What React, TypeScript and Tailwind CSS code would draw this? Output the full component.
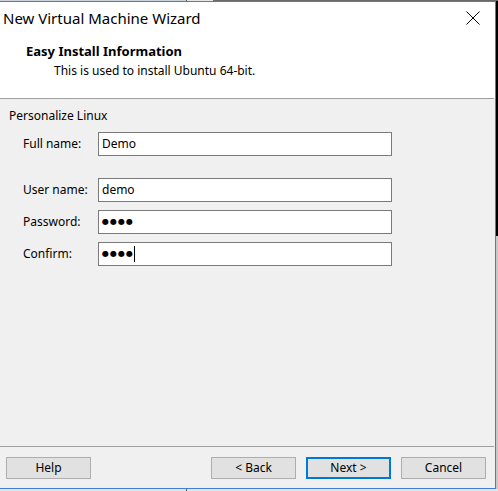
import React from "react";

// Fields of the "Personalize Linux" group
const fields = [
  { label: "Full name:", value: "Demo", kind: "text" },
  { label: "User name:", value: "demo", kind: "text" },
  { label: "Password:", value: "●●●●", kind: "secret" },
  { label: "Confirm:", value: "●●●●", kind: "secret", focused: true },
];

function CloseIcon() {
  return (
    <svg width="14" height="14" viewBox="0 0 14 14" className="block">
      <path d="M0.5 0.5 L13.5 13.5 M13.5 0.5 L0.5 13.5" stroke="#000" strokeWidth="1" fill="none" />
    </svg>
  );
}

function Field({ label, value, kind, focused }: { label: string; value: string; kind: string; focused?: boolean }) {
  return (
    <div className="flex items-center h-[24px]">
      <div className="w-[75px] pl-[23px] box-content text-[12px] text-black">{label}</div>
      <div className="w-[294px] h-[24px] border border-[#7a7a7a] bg-white flex items-center pl-[3px]">
        {kind === "secret" ? (
          <span className="font-['DejaVu_Sans',sans-serif] text-[8px] tracking-[1px] leading-none text-black">{value}</span>
        ) : (
          <span className="text-[12px] text-black">{value}</span>
        )}
        {focused && <span className="w-[1px] h-[16px] bg-black" />}
      </div>
    </div>
  );
}

function WizButton({ label, primary }: { label: string; primary?: boolean }) {
  return (
    <button
      className={
        "w-[85px] h-[22px] bg-[#e1e1e1] text-[12px] text-black flex items-center justify-center " +
        (primary ? "border-2 border-[#0078d7]" : "border border-[#adadad]")
      }
    >
      {label}
    </button>
  );
}

export default function App() {
  return (
    <div className="w-[498px] h-[491px] overflow-hidden flex flex-col bg-[#d4d4d4] font-['Noto_Sans',sans-serif]">
      {/* strip of desktop above the window */}
      <div className="h-[1px] flex shrink-0">
        <div className="w-[186px] bg-[#c9d3de]" />
        <div className="w-[1px] bg-[#5a5a5a]" />
        <div className="w-[26px] bg-[#e6e6e6]" />
        <div className="flex-1 bg-[#6b6b6b]" />
      </div>

      <div className="flex h-[488px] shrink-0">
        {/* dialog window */}
        <div className="w-[496px] h-[488px] flex flex-col border-t border-r border-b border-[#3f80d4] bg-[#f0f0f0]">
          {/* title + header */}
          <div className="h-[96px] bg-white flex flex-col">
            <div className="h-[32px] flex items-center justify-between pl-[3px] pr-[15px]">
              <span className="text-[15px] text-black leading-none">New Virtual Machine Wizard</span>
              <CloseIcon />
            </div>
            <div className="pl-[26px] pt-[10px] text-[13px] font-bold text-black leading-[14px]">Easy Install Information</div>
            <div className="pl-[54px] pt-[6px] text-[12px] text-black leading-[14px]">This is used to install Ubuntu 64-bit.</div>
          </div>
          <div className="h-[1px] bg-[#a0a0a0] mr-[1px]" />

          {/* body */}
          <div className="flex-1 flex flex-col">
            <div className="pl-[9px] pt-[10px] text-[12px] text-black leading-[14px]">Personalize Linux</div>
            <div className="flex flex-col mt-[9px]">
              <Field {...fields[0]} />
              <div className="flex flex-col gap-[8px] mt-[22px]">
                {fields.slice(1).map((f) => (
                  <Field key={f.label} {...f} />
                ))}
              </div>
            </div>
          </div>

          {/* footer */}
          <div className="h-[1px] bg-[#a0a0a0] mr-[1px]" />
          <div className="h-[41px] flex items-start pt-[10px] pl-[6px] pr-[9px]">
            <WizButton label="Help" />
            <div className="flex-1" />
            <div className="flex gap-[10px]">
              <WizButton label="< Back" />
              <WizButton label="Next >" primary />
              <WizButton label="Cancel" />
            </div>
          </div>
        </div>

        {/* desktop to the right */}
        <div className="flex-1 flex flex-col">
          <div className="h-[235px] bg-black" />
          <div className="flex-1 bg-[#c8c8c8]" />
        </div>
      </div>

      <div className="flex-1 flex bg-[#e4e4e4]">
        <div className="w-[186px]" />
        <div className="w-[1px] bg-[#5a5a5a]" />
      </div>
    </div>
  );
}
